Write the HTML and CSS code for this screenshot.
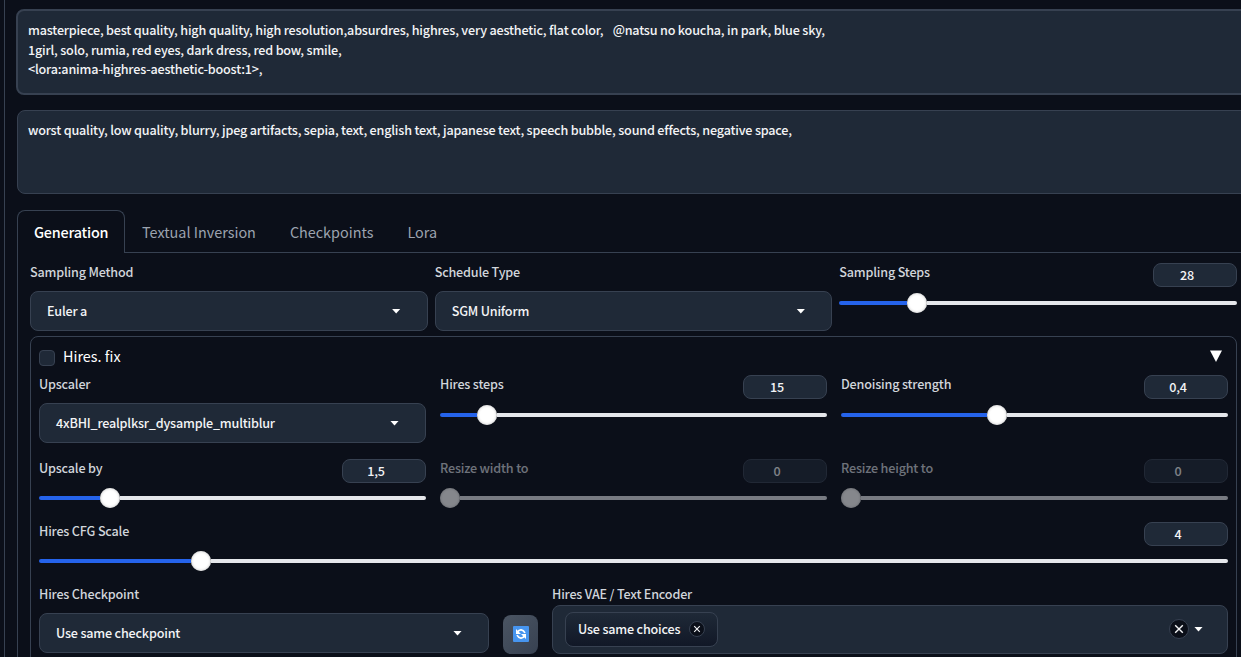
FILE: index.html
```
<!DOCTYPE html>
<html lang="en">
<head>
<meta charset="utf-8">
<title>Generation</title>
<link rel="stylesheet" href="styles.css">
</head>
<body>
<main class="column">
  <div class="prompt prompt-focus"><span class="line">masterpiece, best quality, high quality, high resolution,absurdres, highres, very aesthetic, flat color, &nbsp;<span class="artist">@natsu no koucha, in park, blue sky,</span></span><span class="line">1girl, solo, rumia, red eyes, dark dress, red bow, smile,</span><span class="line">&lt;lora:anima-highres-aesthetic-boost:1&gt;,</span></div>
  <div class="prompt prompt-negative"><span class="line">worst quality, low quality, blurry, jpeg artifacts, sepia, text, english text, japanese text, speech bubble, sound effects, negative space,</span></div>

  <nav class="tabs">
    <span class="tab tab-active">Generation</span>
    <span class="tab">Textual Inversion</span>
    <span class="tab">Checkpoints</span>
    <span class="tab">Lora</span>
  </nav>

  <section class="panel">
    <div class="sampling">
      <div class="field"><label>Sampling Method</label><div class="select"><span>Euler a</span><i class="caret"></i></div></div>
      <div class="field"><label>Schedule Type</label><div class="select"><span>SGM Uniform</span><i class="caret"></i></div></div>
      <div class="range"><div class="range-head"><label>Sampling Steps</label><b class="number">28</b></div><div class="slider"><i class="fill" style="width:68px"></i><i class="thumb"></i><i class="rest"></i></div></div>
    </div>

    <div class="hires">
      <header class="hires-head"><i class="checkbox"></i><span>Hires. fix</span><svg class="toggle" width="12" height="12" viewBox="0 0 12 12"><path d="M0 .5h12L6 12z" fill="#fff"/></svg></header>

      <div class="grid grid-top">
        <div class="field"><label>Upscaler</label><div class="select"><span>4xBHI_realplksr_dysample_multiblur</span><i class="caret"></i></div></div>
        <div class="range"><div class="range-head"><label>Hires steps</label><b class="number">15</b></div><div class="slider"><i class="fill" style="width:37px"></i><i class="thumb"></i><i class="rest"></i></div></div>
        <div class="range"><div class="range-head"><label>Denoising strength</label><b class="number">0,4</b></div><div class="slider"><i class="fill" style="width:146px"></i><i class="thumb"></i><i class="rest"></i></div></div>
      </div>

      <div class="grid grid-size">
        <div class="range"><div class="range-head"><label>Upscale by</label><b class="number">1,5</b></div><div class="slider"><i class="fill" style="width:61px"></i><i class="thumb"></i><i class="rest"></i></div></div>
        <div class="range disabled"><div class="range-head"><label>Resize width to</label><b class="number">0</b></div><div class="slider"><i class="fill" style="width:0"></i><i class="thumb"></i><i class="rest"></i></div></div>
        <div class="range disabled"><div class="range-head"><label>Resize height to</label><b class="number">0</b></div><div class="slider"><i class="fill" style="width:0"></i><i class="thumb"></i><i class="rest"></i></div></div>
      </div>

      <div class="range cfg"><div class="range-head"><label>Hires CFG Scale</label><b class="number">4</b></div><div class="slider"><i class="fill" style="width:152px"></i><i class="thumb"></i><i class="rest"></i></div></div>

      <div class="models">
        <div class="field checkpoint"><label>Hires Checkpoint</label><div class="select"><span>Use same checkpoint</span><i class="caret"></i></div></div>
        <button class="refresh"><svg width="16" height="16" viewBox="0 0 16 16"><rect width="16" height="16" rx="1" fill="#4795ef"/><g fill="none" stroke="#fff" stroke-width="1.7"><path d="M4.4 6.2C6.3 3 10 3.2 12 6.8M11.6 9.8C9.7 13 6 12.800 4 9.200"/></g><path d="M3 3v5h5zM13 13V8H8z" fill="#fff"/></svg></button>
        <div class="field encoder"><label>Hires VAE / Text Encoder</label>
          <div class="multiselect">
            <div class="token"><span>Use same choices</span><svg width="16" height="16" viewBox="0 0 16 16"><circle cx="8" cy="8" r="7.500" fill="#0b0f19" stroke="#374151"/><path d="M5.200 5.200l5.600 5.600M10.800 5.200l-5.600 5.600" stroke="#f3f4f6" stroke-width="1.100"/></svg></div>
            <svg class="clear" width="20" height="20" viewBox="0 0 20 20"><circle cx="10" cy="10" r="9.500" fill="#0b0f19" stroke="#374151"/><path d="M6.200 6.200l7.600 7.600M13.800 6.200l-7.600 7.600" stroke="#f3f4f6" stroke-width="1.400"/></svg>
            <i class="caret"></i>
          </div>
        </div>
      </div>
    </div>
  </section>
</main>
</body>
</html>
```
FILE: styles.css
```
* { box-sizing: border-box; }
body {
  margin: 0;
  height: 657px;
  overflow: hidden;
  background: #0b0f19;
  color: #f3f4f6;
  font: 500 12.6px/20px "Noto Sans CJK SC", "Noto Sans", sans-serif;
  letter-spacing: -.187px;
}
i { display: block; flex: none; }
.column {
  height: 657px;
  margin-left: 4px;
  padding: 9px 0 0 12px;
  border-left: 1px solid #374151;
}
.prompt {
  height: 84px;
  width: 1240px;
  padding: 9px 10px;
  border: 1px solid #374151;
  border-radius: 8px;
  background: #1f2937;
  line-height: 19.6px;
  white-space: nowrap;
}
.prompt-focus { height: 86px; margin-left: -1px; border-width: 2px; }
.prompt-negative { margin-top: 15px; }
.line { display: block; width: max-content; }
.artist { margin-left: 4px; }
.tabs {
  display: flex;
  height: 43px;
  margin-top: 16px;
  font-size: 14.4px;
  font-weight: 400;
  letter-spacing: 0;
  color: #9ca3af;
  box-shadow: inset 0 -1px #374151;
}
.tab { padding: 11px 17px 0; line-height: 22px; }
.tab-active {
  width: 108px;
  padding: 10px 0 0 16px;
  border: 1px solid #374151;
  border-bottom: 0;
  border-radius: 8px 8px 0 0;
  background: #0b0f19;
  color: #fff;
  font-weight: 500;
  letter-spacing: -.22px;
}
.panel { width: 1224px; padding: 9px 4px 0 12px; border-left: 1px solid #374151; }
.sampling { display: grid; grid-template-columns: repeat(3, 1fr); gap: 7px; height: 74px; }
label { display: block; height: 20px; color: #d1d5db; white-space: nowrap; }
.select {
  display: flex;
  align-items: center;
  justify-content: space-between;
  height: 40px;
  margin-top: 9px;
  padding: 0 26px 0 16px;
  border: 1px solid #374151;
  border-radius: 8px;
  background: #1f2937;
}
.caret { width: 9px; height: 5px; background: #fff; clip-path: polygon(0 0, 100% 0, 50% 100%); }
.range-head { display: flex; justify-content: space-between; height: 25px; }
.number {
  width: 84px;
  height: 24px;
  margin-top: 1px;
  padding-right: 16px;
  border: 1px solid #374151;
  border-radius: 8px;
  background: #1f2937;
  font-weight: 500;
  line-height: 22px;
  text-align: center;
}
.slider { display: flex; align-items: center; height: 20px; margin-top: 6px; }
.fill { height: 4px; border-radius: 2px 0 0 2px; background: #2563eb; }
.thumb { width: 20px; height: 20px; border-radius: 50%; background: #fff; box-shadow: inset 0 0 3px #bbb; }
.rest { flex: 1; height: 4px; border-radius: 0 2px 2px 0; background: #e5e7eb; }
.disabled { opacity: .5; }
.hires { height: 340px; padding: 0 8px; border: 1px solid #374151; border-radius: 8px; }
.hires-head { display: flex; align-items: center; height: 37px; padding-top: 1px; font-size: 14.4px; font-weight: 400; letter-spacing: 0; color: #fff; }
.checkbox { width: 16px; height: 16px; margin: 3px 8px 0 0; border: 1px solid #374151; border-radius: 4px; background: #1f2937; }
.toggle { margin: 0 6px 0 auto; }
.grid { display: grid; grid-template-columns: repeat(3, 387px); gap: 14px; }
.grid-top { height: 84px; }
.grid-size { height: 63px; }
.grid-size .slider, .cfg .slider { margin-top: 5px; }
.cfg { height: 63px; }
.models { display: flex; }
.checkpoint { width: 450px; }
.refresh {
  display: grid;
  place-items: center;
  width: 35px;
  height: 39px;
  margin: 31px 14px 0;
  padding: 0 0 1px;
  border: 0;
  border-radius: 8px;
  background: linear-gradient(135deg, #4b5563, #374151);
}
.encoder { width: 676px; }
.multiselect {
  display: flex;
  align-items: center;
  height: 49px;
  margin-top: 1px;
  padding: 0 24px 1px 12px;
  border: 1px solid #374151;
  border-radius: 8px;
  background: #1f2937;
}
.token {
  display: flex;
  align-items: center;
  justify-content: space-between;
  width: 153px;
  height: 35px;
  padding: 0 12px;
  border: 1px solid #374151;
  border-radius: 8px;
  background: linear-gradient(#1f2937, #111827);
  white-space: nowrap;
}
.clear { margin: 0 5px 0 auto; }
```
